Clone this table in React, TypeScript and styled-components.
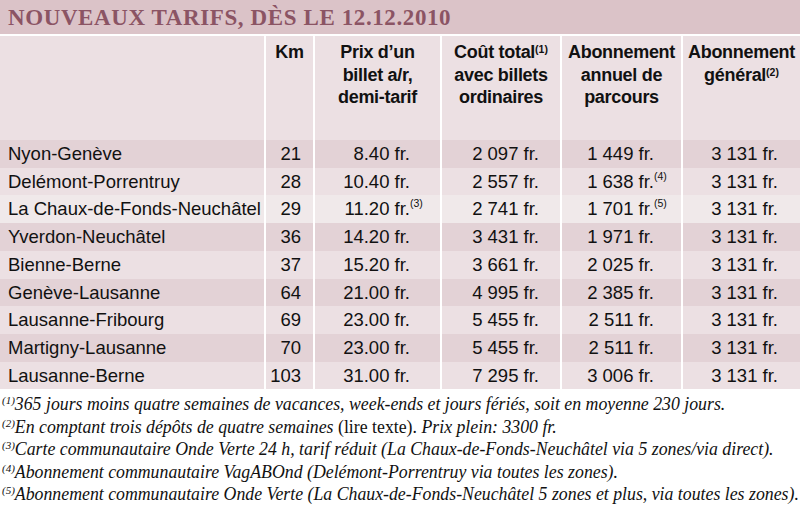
import React from "react";
import styled, { createGlobalStyle } from "styled-components";

const Global = createGlobalStyle`
  html, body { margin: 0; padding: 0; background: #ffffff; }
  body { width: 802px; height: 506px; overflow: hidden; }
`;

const Page = styled.div`
  width: 800px;
  display: flex;
  flex-direction: column;
  font-family: "Liberation Sans", Arial, sans-serif;
  color: #111111;
`;

const TitleBar = styled.div`
  height: 34px;
  background: #dbc3c8;
  display: flex;
  align-items: center;
  padding-left: 8px;
  margin-bottom: 2px;
`;

const Title = styled.h1`
  margin: 0;
  font-family: "Liberation Serif", "Times New Roman", serif;
  font-weight: bold;
  font-size: 23px;
  letter-spacing: 0.6px;
  color: #8b5464;
  text-transform: uppercase;
  line-height: 1;
`;

const Table = styled.table`
  width: 800px;
  border-collapse: collapse;
  table-layout: fixed;
`;

const HeadRow = styled.tr`
  height: 104px;
`;

const HeadCell = styled.th<{ $first?: boolean }>`
  background: #ece0e3;
  vertical-align: top;
  padding: 5px 0 0 0;
  font-weight: bold;
  font-size: 18px;
  letter-spacing: -0.3px;
  line-height: 22.5px;
  text-align: center;
  border-left: ${(p) => (p.$first ? "none" : "2px solid #ffffff")};
`;

const Row = styled.tr<{ $tone: "dark" | "light" | "pale" }>`
  height: 27.7px;
  background: ${(p) =>
    p.$tone === "dark" ? "#e3d2d6" : p.$tone === "pale" ? "#f0e9ea" : "#ece0e3"};
`;

const NameCell = styled.td`
  padding: 0 0 0 8px;
  font-size: 18.5px;
  white-space: nowrap;
  line-height: 27.7px;
`;

const NumCell = styled.td<{ $pr: number }>`
  padding: 0 ${(p) => p.$pr}px 0 0;
  text-align: right;
  font-size: 18.5px;
  white-space: nowrap;
  line-height: 27.7px;
  border-left: 2px solid #ffffff;
`;

const Sup = styled.span`
  display: inline-block;
  width: 0;
  white-space: nowrap;
  font-size: 10.5px;
  vertical-align: top;
  line-height: 16px;
  text-align: left;
`;

const HeadSup = styled.span`
  font-size: 10.5px;
  vertical-align: top;
  line-height: 16px;
  letter-spacing: 0;
`;

const Notes = styled.div`
  display: flex;
  flex-direction: column;
  padding: 4px 0 0 2px;
`;

const Note = styled.p`
  margin: 0;
  font-family: "Liberation Serif", "Times New Roman", serif;
  font-style: italic;
  font-size: 17.8px;
  line-height: 22.4px;
  white-space: nowrap;
  color: #111111;
`;

const NoteNum = styled.span`
  font-style: italic;
  font-size: 11px;
  vertical-align: top;
  line-height: 14px;
`;

const Upright = styled.span`
  font-style: normal;
`;

type Tone = "dark" | "light" | "pale";
type Cell = { v: string; s?: string };
const rows: { name: string; tone: Tone; km: string; prix: Cell; cout: string; annuel: Cell; gen: string }[] = [
  { name: "Nyon-Genève", tone: "dark", km: "21", prix: { v: "8.40 fr." }, cout: "2 097 fr.", annuel: { v: "1 449 fr." }, gen: "3 131 fr." },
  { name: "Delémont-Porrentruy", tone: "light", km: "28", prix: { v: "10.40 fr." }, cout: "2 557 fr.", annuel: { v: "1 638 fr.", s: "(4)" }, gen: "3 131 fr." },
  { name: "La Chaux-de-Fonds-Neuchâtel", tone: "pale", km: "29", prix: { v: "11.20 fr.", s: "(3)" }, cout: "2 741 fr.", annuel: { v: "1 701 fr.", s: "(5)" }, gen: "3 131 fr." },
  { name: "Yverdon-Neuchâtel", tone: "dark", km: "36", prix: { v: "14.20 fr." }, cout: "3 431 fr.", annuel: { v: "1 971 fr." }, gen: "3 131 fr." },
  { name: "Bienne-Berne", tone: "light", km: "37", prix: { v: "15.20 fr." }, cout: "3 661 fr.", annuel: { v: "2 025 fr." }, gen: "3 131 fr." },
  { name: "Genève-Lausanne", tone: "dark", km: "64", prix: { v: "21.00 fr." }, cout: "4 995 fr.", annuel: { v: "2 385 fr." }, gen: "3 131 fr." },
  { name: "Lausanne-Fribourg", tone: "light", km: "69", prix: { v: "23.00 fr." }, cout: "5 455 fr.", annuel: { v: "2 511 fr." }, gen: "3 131 fr." },
  { name: "Martigny-Lausanne", tone: "dark", km: "70", prix: { v: "23.00 fr." }, cout: "5 455 fr.", annuel: { v: "2 511 fr." }, gen: "3 131 fr." },
  { name: "Lausanne-Berne", tone: "light", km: "103", prix: { v: "31.00 fr." }, cout: "7 295 fr.", annuel: { v: "3 006 fr." }, gen: "3 131 fr." },
];

export default function App() {
  return (
    <>
      <Global />
      <Page>
        <TitleBar>
          <Title>Nouveaux tarifs, dès le 12.12.2010</Title>
        </TitleBar>
        <Table>
          <colgroup>
            <col style={{ width: 265 }} />
            <col style={{ width: 49 }} />
            <col style={{ width: 127 }} />
            <col style={{ width: 120 }} />
            <col style={{ width: 121 }} />
            <col style={{ width: 118 }} />
          </colgroup>
          <thead>
            <HeadRow>
              <HeadCell $first />
              <HeadCell>Km</HeadCell>
              <HeadCell>
                Prix d’un
                <br />
                billet a/r,
                <br />
                demi-tarif
              </HeadCell>
              <HeadCell>
                Coût total<HeadSup>(1)</HeadSup>
                <br />
                avec billets
                <br />
                ordinaires
              </HeadCell>
              <HeadCell>
                Abonnement
                <br />
                annuel de
                <br />
                parcours
              </HeadCell>
              <HeadCell>
                Abonnement
                <br />
                général<HeadSup>(2)</HeadSup>
              </HeadCell>
            </HeadRow>
          </thead>
          <tbody>
            {rows.map((r) => (
              <Row key={r.name} $tone={r.tone}>
                <NameCell>{r.name}</NameCell>
                <NumCell $pr={12}>{r.km}</NumCell>
                <NumCell $pr={30}>
                  {r.prix.v}
                  {r.prix.s && <Sup>{r.prix.s}</Sup>}
                </NumCell>
                <NumCell $pr={21}>{r.cout}</NumCell>
                <NumCell $pr={27}>
                  {r.annuel.v}
                  {r.annuel.s && <Sup>{r.annuel.s}</Sup>}
                </NumCell>
                <NumCell $pr={22}>{r.gen}</NumCell>
              </Row>
            ))}
          </tbody>
        </Table>
        <Notes>
          <Note>
            <NoteNum>(1)</NoteNum>365 jours moins quatre semaines de vacances, week-ends et jours fériés, soit en moyenne 230 jours.
          </Note>
          <Note>
            <NoteNum>(2)</NoteNum>En comptant trois dépôts de quatre semaines <Upright>(lire texte).</Upright> Prix plein: 3300 fr.
          </Note>
          <Note>
            <NoteNum>(3)</NoteNum>Carte communautaire Onde Verte 24 h, tarif réduit (La Chaux-de-Fonds-Neuchâtel via 5 zones/via direct).
          </Note>
          <Note>
            <NoteNum>(4)</NoteNum>Abonnement communautaire VagABOnd (Delémont-Porrentruy via toutes les zones).
          </Note>
          <Note>
            <NoteNum>(5)</NoteNum>Abonnement communautaire Onde Verte (La Chaux-de-Fonds-Neuchâtel 5 zones et plus, via toutes les zones).
          </Note>
        </Notes>
      </Page>
    </>
  );
}
